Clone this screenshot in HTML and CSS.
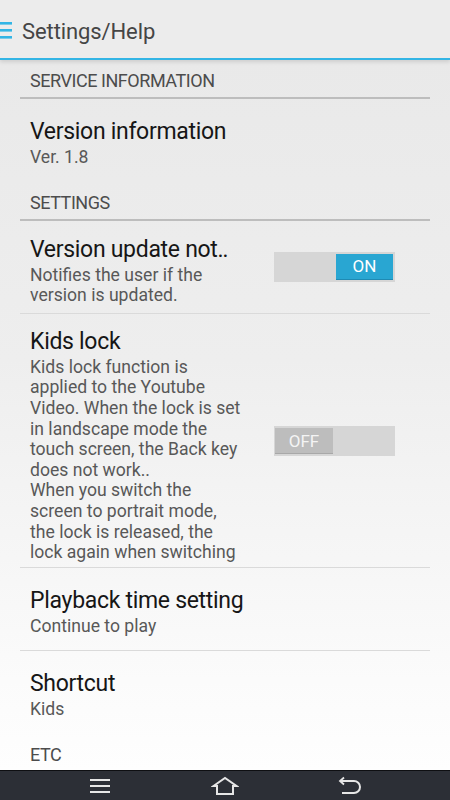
FILE: index.html
```html
<!DOCTYPE html>
<html lang="en">
<head>
<meta charset="utf-8">
<title>Settings/Help</title>
<link rel="stylesheet" href="styles.css">
</head>
<body>
<div class="screen">
  <header class="appbar">
    <svg class="menu-icon" width="14" height="20" viewBox="0 0 14 20" aria-hidden="true">
      <rect x="0" y="1" width="12" height="2.6" fill="#33b5e5"/>
      <rect x="0" y="8" width="12" height="2.6" fill="#33b5e5"/>
      <rect x="0" y="15" width="12" height="2.6" fill="#33b5e5"/>
    </svg>
    <h1 class="appbar-title">Settings/Help</h1>
  </header>
  <main class="list">
    <div class="section">SERVICE INFORMATION</div>
    <div class="row">
      <div class="text">
        <div class="title">Version information</div>
        <div class="sub">Ver. 1.8</div>
      </div>
    </div>
    <div class="section">SETTINGS</div>
    <div class="row row-toggle divided">
      <div class="text">
        <div class="title nowrap">Version update not‥</div>
        <div class="sub">Notifies the user if the version is updated.</div>
      </div>
      <div class="switch on"><span class="thumb">ON</span></div>
    </div>
    <div class="row row-toggle row-long divided">
      <div class="text">
        <div class="title">Kids lock</div>
        <div class="sub">Kids lock function is applied to the Youtube Video. When the lock is set in landscape mode the touch screen, the Back key does not work..<br>When you switch the screen to portrait mode, the lock is released, the lock again when switching</div>
      </div>
      <div class="switch off"><span class="thumb">OFF</span></div>
    </div>
    <div class="row divided">
      <div class="text">
        <div class="title">Playback time setting</div>
        <div class="sub">Continue to play</div>
      </div>
    </div>
    <div class="row">
      <div class="text">
        <div class="title">Shortcut</div>
        <div class="sub">Kids</div>
      </div>
    </div>
    <div class="section">ETC</div>
  </main>
  <nav class="navbar">
    <svg class="nav-icon" width="24" height="20" viewBox="0 0 24 20" aria-hidden="true">
      <rect x="2" y="3" width="20" height="2" fill="#e6e6e6"/>
      <rect x="2" y="9" width="20" height="2" fill="#e6e6e6"/>
      <rect x="2" y="15" width="20" height="2" fill="#e6e6e6"/>
    </svg>
    <svg class="nav-icon" width="28" height="20" viewBox="0 0 28 20" aria-hidden="true">
      <path d="M2.5 10 L14 2 L25.5 10 L22 10 L22 18 L6 18 L6 10 Z" fill="none" stroke="#e6e6e6" stroke-width="2" stroke-linejoin="miter"/>
    </svg>
    <svg class="nav-icon" width="26" height="20" viewBox="0 0 26 20" aria-hidden="true">
      <path d="M7 1.5 L3 5 L7 8.5" fill="none" stroke="#e6e6e6" stroke-width="1.8"/>
      <path d="M3.5 5 L17 5 A6 6 0 0 1 17 17 L5 17" fill="none" stroke="#e6e6e6" stroke-width="2"/>
    </svg>
  </nav>
</div>
</body>
</html>
```
FILE: styles.css
```css
* { box-sizing: border-box; }

html, body {
  margin: 0;
  padding: 0;
}

body {
  font-family: Roboto, "Noto Sans", "Liberation Sans", sans-serif;
  width: 450px;
  height: 800px;
  overflow: hidden;
}

.screen {
  width: 450px;
  height: 800px;
  display: flex;
  flex-direction: column;
  background: linear-gradient(#e8e8e8 0%, #eeeeee 45%, #fbfbfb 85%, #ffffff 100%);
}

.appbar {
  height: 60px;
  flex: 0 0 60px;
  display: flex;
  align-items: center;
  padding-top: 4px;
  background: #ececec;
  border-bottom: 2px solid #33b5e5;
  box-shadow: 0 2px 4px rgba(0, 0, 0, 0.12);
  position: relative;
  z-index: 1;
}

.menu-icon {
  margin: -1px 8px 0 0;
}

.appbar-title {
  margin: 0;
  font-weight: 400;
  font-size: 22px;
  color: #454545;
  letter-spacing: -0.1px;
}

.list {
  flex: 1;
  overflow: hidden;
  padding: 0 20px;
}

.section {
  padding: 11px 10px 6px;
  font-size: 18px;
  line-height: 20px;
  letter-spacing: -0.45px;
  color: #4c4c4c;
  border-bottom: 2px solid #bdbdbd;
}

.row {
  display: flex;
  align-items: center;
  padding: 19px 10px 14px;
}

.row.divided {
  border-bottom: 1px solid #dadada;
}

.row-toggle {
  padding: 15px 35px 7px 10px;
}

.row-long {
  padding-top: 14px;
  padding-bottom: 4px;
}

.text {
  flex: 1;
  min-width: 0;
}

.title {
  margin-top: 1px;
  font-size: 23px;
  line-height: 26px;
  letter-spacing: -0.3px;
  color: #161616;
}

.nowrap {
  white-space: nowrap;
}

.sub {
  margin-top: 2px;
  font-size: 17.6px;
  line-height: 20.6px;
  color: #585858;
}

.switch {
  flex: 0 0 121px;
  width: 121px;
  height: 30px;
  margin-left: 30px;
  margin-bottom: 8px;
  background: #d6d6d6;
  display: flex;
  align-items: center;
  padding: 0 2px;
}

.switch.on {
  justify-content: flex-end;
}

.switch.off {
  justify-content: flex-start;
  padding-left: 1px;
}

.thumb {
  width: 57px;
  height: 26px;
  display: flex;
  align-items: center;
  justify-content: center;
  font-size: 17px;
  color: #ffffff;
}

.switch.on .thumb {
  background: #29a6d2;
  border-bottom: 1px solid #1f8ab3;
}

.switch.off .thumb {
  width: 58px;
  background: #bdbdbd;
  border-bottom: 1px solid #a8a8a8;
  color: #f4f4f4;
}

.navbar {
  height: 30px;
  flex: 0 0 30px;
  background: #2c2f36;
  border-top: 1px solid #0e0f12;
  display: grid;
  grid-template-columns: repeat(3, 125px);
  justify-content: center;
  justify-items: center;
  align-items: center;
}
```
